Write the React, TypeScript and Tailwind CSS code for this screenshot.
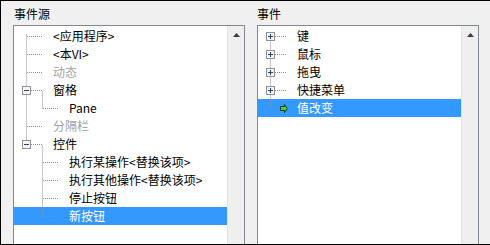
import React from "react";

type Item = {
  label: string;
  level: 1 | 2;
  expander?: "minus" | "plus";
  disabled?: boolean;
  selected?: boolean;
  arrow?: boolean;
};

const sourceItems: Item[] = [
  { label: "<应用程序>", level: 1 },
  { label: "<本VI>", level: 1 },
  { label: "动态", level: 1, disabled: true },
  { label: "窗格", level: 1, expander: "minus" },
  { label: "Pane", level: 2 },
  { label: "分隔栏", level: 1, disabled: true },
  { label: "控件", level: 1, expander: "minus" },
  { label: "执行某操作<替换该项>", level: 2 },
  { label: "执行其他操作<替换该项>", level: 2 },
  { label: "停止按钮", level: 2 },
  { label: "新按钮", level: 2, selected: true },
];

const eventItems: Item[] = [
  { label: "键", level: 1, expander: "plus" },
  { label: "鼠标", level: 1, expander: "plus" },
  { label: "拖曳", level: 1, expander: "plus" },
  { label: "快捷菜单", level: 1, expander: "plus" },
  { label: "值改变", level: 1, selected: true, arrow: true },
];

const ROW = 18;
const TOP = 1;

function center(i: number) {
  return TOP + i * ROW + 9.5;
}

// dotted connector lines + expander boxes, drawn over the rows
function TreeLines({ items }: { items: Item[] }) {
  const lastTop = items.map((it, i) => (it.level === 1 ? i : -1)).filter((i) => i >= 0).pop() ?? 0;
  const segs: React.ReactNode[] = [];

  segs.push(<line key="v1" x1={12.5} y1={center(0) - 2} x2={12.5} y2={center(lastTop)} />);

  items.forEach((it, i) => {
    const y = center(i);
    if (it.level === 1) {
      segs.push(<line key={"h" + i} x1={13} y1={y} x2={it.arrow ? 20 : 29} y2={y} />);
      if (it.expander) {
        let last = i;
        for (let j = i + 1; j < items.length && items[j].level === 2; j++) last = j;
        if (last > i) {
          segs.push(<line key={"v2" + i} x1={28.5} y1={y + 1} x2={28.5} y2={center(last)} />);
        }
      }
    } else {
      segs.push(<line key={"h" + i} x1={29} y1={y} x2={44} y2={y} />);
    }
  });

  return (
    <svg className="absolute left-0 top-0 pointer-events-none" width="220" height="240">
      <g stroke="#8e8e8e" strokeWidth="1" strokeDasharray="1 1" fill="none">
        {segs}
      </g>
      {items.map((it, i) => {
        const y = Math.floor(center(i)) - 4;
        if (it.expander) {
          return (
            <g key={"b" + i}>
              <rect x={8.5} y={y + 0.5} width={8} height={8} fill="#f4f4f4" stroke="#919191" />
              <line x1={10} y1={y + 4.5} x2={15} y2={y + 4.5} stroke="#23427a" />
              {it.expander === "plus" && <line x1={12.5} y1={y + 2} x2={12.5} y2={y + 7} stroke="#23427a" />}
            </g>
          );
        }
        if (it.arrow) {
          return (
            <path
              key={"a" + i}
              d={`M22.5 ${y + 2.5} H26.5 V${y + 0.5} L29.5 ${y + 4.5} L26.5 ${y + 8.5} V${y + 6.5} H22.5 Z`}
              fill="#3ccf3c"
              stroke="#1c3a1c"
              strokeWidth="1"
            />
          );
        }
        return null;
      })}
    </svg>
  );
}

function Scrollbar() {
  return (
    <div className="w-[17px] shrink-0 bg-[#efefef] border-l border-[#e4e4e4]">
      <div className="h-[17px] flex items-center justify-center">
        <svg width="7" height="4">
          <path d="M3.5 0 L7 4 H0 Z" fill="#3c3c3c" />
        </svg>
      </div>
    </div>
  );
}

function TreePanel({ title, items, width, titlePad }: { title: string; items: Item[]; width: string; titlePad: string }) {
  return (
    <div className={`${width} shrink-0 flex flex-col`}>
      <div className={`h-[24px] pt-[5px] leading-[16px] text-black ${titlePad}`}>{title}</div>
      <div className="h-[240px] border border-[#828790] bg-white flex">
        <div className="relative flex-1 pt-[1px]">
          {items.map((it) => (
            <div
              key={it.label}
              className={`h-[18px] leading-[18px] whitespace-nowrap ${it.level === 1 ? "pl-[39px]" : "pl-[55px]"} ${
                it.selected ? "bg-[#3399ff] text-white" : it.disabled ? "text-[#a3a3a3]" : "text-black"
              }`}
            >
              {it.label}
            </div>
          ))}
          <TreeLines items={items} />
        </div>
        <Scrollbar />
      </div>
    </div>
  );
}

export default function App() {
  return (
    <div className="w-[490px] h-[245px] overflow-hidden bg-[#f0f0f0] border-t border-l border-b border-black flex items-start gap-[12px] pl-[12px] text-[12px] font-['Noto_Sans_CJK_SC','Noto_Sans',sans-serif]">
      <TreePanel title="事件源" items={sourceItems} width="w-[232px]" titlePad="pl-[1px]" />
      <TreePanel title="事件" items={eventItems} width="w-[222px]" titlePad="pl-0" />
    </div>
  );
}
